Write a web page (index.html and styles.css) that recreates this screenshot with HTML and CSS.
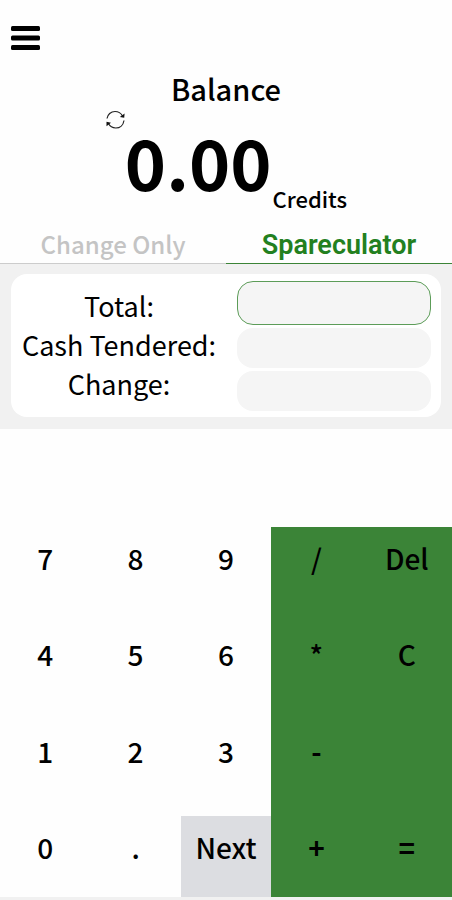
FILE: index.html
```html
<!DOCTYPE html>
<html lang="en">
<head>
<meta charset="utf-8">
<meta name="viewport" content="width=device-width, initial-scale=1">
<title>Spareculator</title>
<link rel="stylesheet" href="styles.css">
</head>
<body>
<header class="topbar">
  <button class="menu" type="button" aria-label="Menu">
    <svg width="29" height="24" viewBox="0 0 29 24" aria-hidden="true">
      <rect width="29" height="5" rx="1.5"/>
      <rect y="9.5" width="29" height="5" rx="1.5"/>
      <rect y="19" width="29" height="5" rx="1.5"/>
    </svg>
  </button>
</header>
<main class="page">
  <section class="balance">
    <h1 class="balance-title">Balance</h1>
    <div class="balance-row">
      <button class="refresh" type="button" aria-label="Refresh balance">
        <svg width="20" height="20" viewBox="0 0 20 20" aria-hidden="true">
          <path d="M2 8.500C2.600 4.500 5.800 1.500 10 1.500C13.500 1.500 16 3.200 17.500 6" fill="none" stroke="#222" stroke-width="1.200"/>
          <path d="M19 10.500C18.300 15 15 18 10.800 18C7.500 18 4.800 16.200 3.300 13.300" fill="none" stroke="#222" stroke-width="1.200"/>
          <path d="M19.600 3.600L19.200 7.800L14.800 6.900ZM1.500 16.200L1.500 11.700L6 12.800Z" fill="#111"/>
        </svg>
      </button>
      <span class="amount">0.00</span>
      <span class="unit">Credits</span>
    </div>
  </section>
  <nav class="tabs">
    <a class="tab" href="#change">Change Only</a>
    <a class="tab tab-active" href="#spareculator" aria-current="page">Spareculator</a>
  </nav>
  <section class="panel">
    <form class="card">
      <div class="labels">
        <label for="total">Total:</label>
        <label for="cash">Cash Tendered:</label>
        <label for="change">Change:</label>
      </div>
      <div class="fields">
        <input class="field field-current" id="total" type="text" inputmode="none">
        <input class="field" id="cash" type="text" inputmode="none">
        <input class="field" id="change" type="text" readonly>
      </div>
    </form>
  </section>
  <section class="keypad" aria-label="Keypad">
    <div class="keys digits">
      <button type="button">7</button>
      <button type="button">8</button>
      <button type="button">9</button>
      <button type="button">4</button>
      <button type="button">5</button>
      <button type="button">6</button>
      <button type="button">1</button>
      <button type="button">2</button>
      <button type="button">3</button>
      <button type="button">0</button>
      <button type="button">.</button>
      <button class="next" type="button">Next</button>
    </div>
    <div class="keys operators">
      <button type="button">/</button>
      <button type="button">Del</button>
      <button type="button">*</button>
      <button type="button">C</button>
      <button class="sign" type="button">-</button>
      <span></span>
      <button class="sign" type="button">+</button>
      <button class="sign" type="button">=</button>
    </div>
  </section>
</main>
</body>
</html>
```
FILE: styles.css
```css
* {
  box-sizing: border-box;
}

body {
  margin: 0;
  min-height: 100vh;
  display: flex;
  flex-direction: column;
  background: #fefefe;
  color: #000;
  font-family: "Noto Sans CJK SC", "Noto Sans", sans-serif;
}

button {
  margin: 0;
  padding: 0;
  border: 0;
  background: none;
  color: inherit;
  font: inherit;
  cursor: pointer;
}

svg {
  display: block;
}

.topbar {
  padding: 26px 11px 0;
}

.page {
  flex: 1;
  display: flex;
  flex-direction: column;
}

.balance {
  padding-top: 14px;
}

.balance-title {
  margin: 0;
  font-size: 29px;
  line-height: 39px;
  font-weight: 500;
  text-align: center;
}

.balance-row {
  display: flex;
  justify-content: center;
  height: 120px;
}

.refresh {
  align-self: flex-start;
  padding-top: 2px;
}

.amount {
  font-size: 70px;
  line-height: 106px;
  font-weight: 700;
}

.unit {
  margin-top: 74px;
  margin-left: 1px;
  font-size: 22px;
  line-height: 32px;
  font-weight: 500;
}

.tabs {
  display: grid;
  grid-template-columns: 1fr 1fr;
}

.tab {
  padding-bottom: 4px;
  border-bottom: 1px solid #ccc;
  color: #c4c4c4;
  font-size: 24px;
  line-height: 31px;
  font-weight: 500;
  text-align: center;
  text-decoration: none;
}

.tab-active {
  padding-bottom: 0;
  border-bottom-color: #3b8437;
  color: #23801f;
  font-family: Roboto, sans-serif;
  font-size: 27px;
  line-height: 35px;
  font-weight: 600;
}

.panel {
  padding: 10px 11px 12px;
  background: #f1f1f1;
}

.card {
  display: grid;
  grid-template-columns: 1fr 194px;
  column-gap: 10px;
  padding: 7px 10px 6px 0;
  border-radius: 16px;
  background: #fff;
}

.labels {
  display: flex;
  flex-direction: column;
  padding-top: 5px;
  font-size: 27px;
  line-height: 39px;
  text-align: center;
}

.fields {
  display: flex;
  flex-direction: column;
  gap: 3px;
}

.field {
  width: 100%;
  height: 40px;
  padding: 0 12px;
  border: 0;
  border-radius: 16px;
  background: #f5f5f5;
  font: inherit;
  font-size: 22px;
}

.field-current {
  height: 44px;
  border: 1px solid #5c9c58;
}

.keypad {
  flex: 1;
  display: grid;
  grid-template-columns: 3fr 2fr;
  margin-top: 98px;
  border-bottom: 3px solid #f1f1f1;
}

.keys {
  display: grid;
  grid-template-rows: repeat(4, 1fr);
  row-gap: 15px;
  font-size: 28px;
  line-height: 40px;
  font-weight: 500;
}

.keys button {
  padding-bottom: 19px;
}

.digits {
  grid-template-columns: repeat(3, 1fr);
}

.operators {
  grid-template-columns: repeat(2, 1fr);
  background: #3b8437;
}

.operators .sign {
  font-weight: 700;
}

.digits .next {
  background: #dcdde1;
}
```
